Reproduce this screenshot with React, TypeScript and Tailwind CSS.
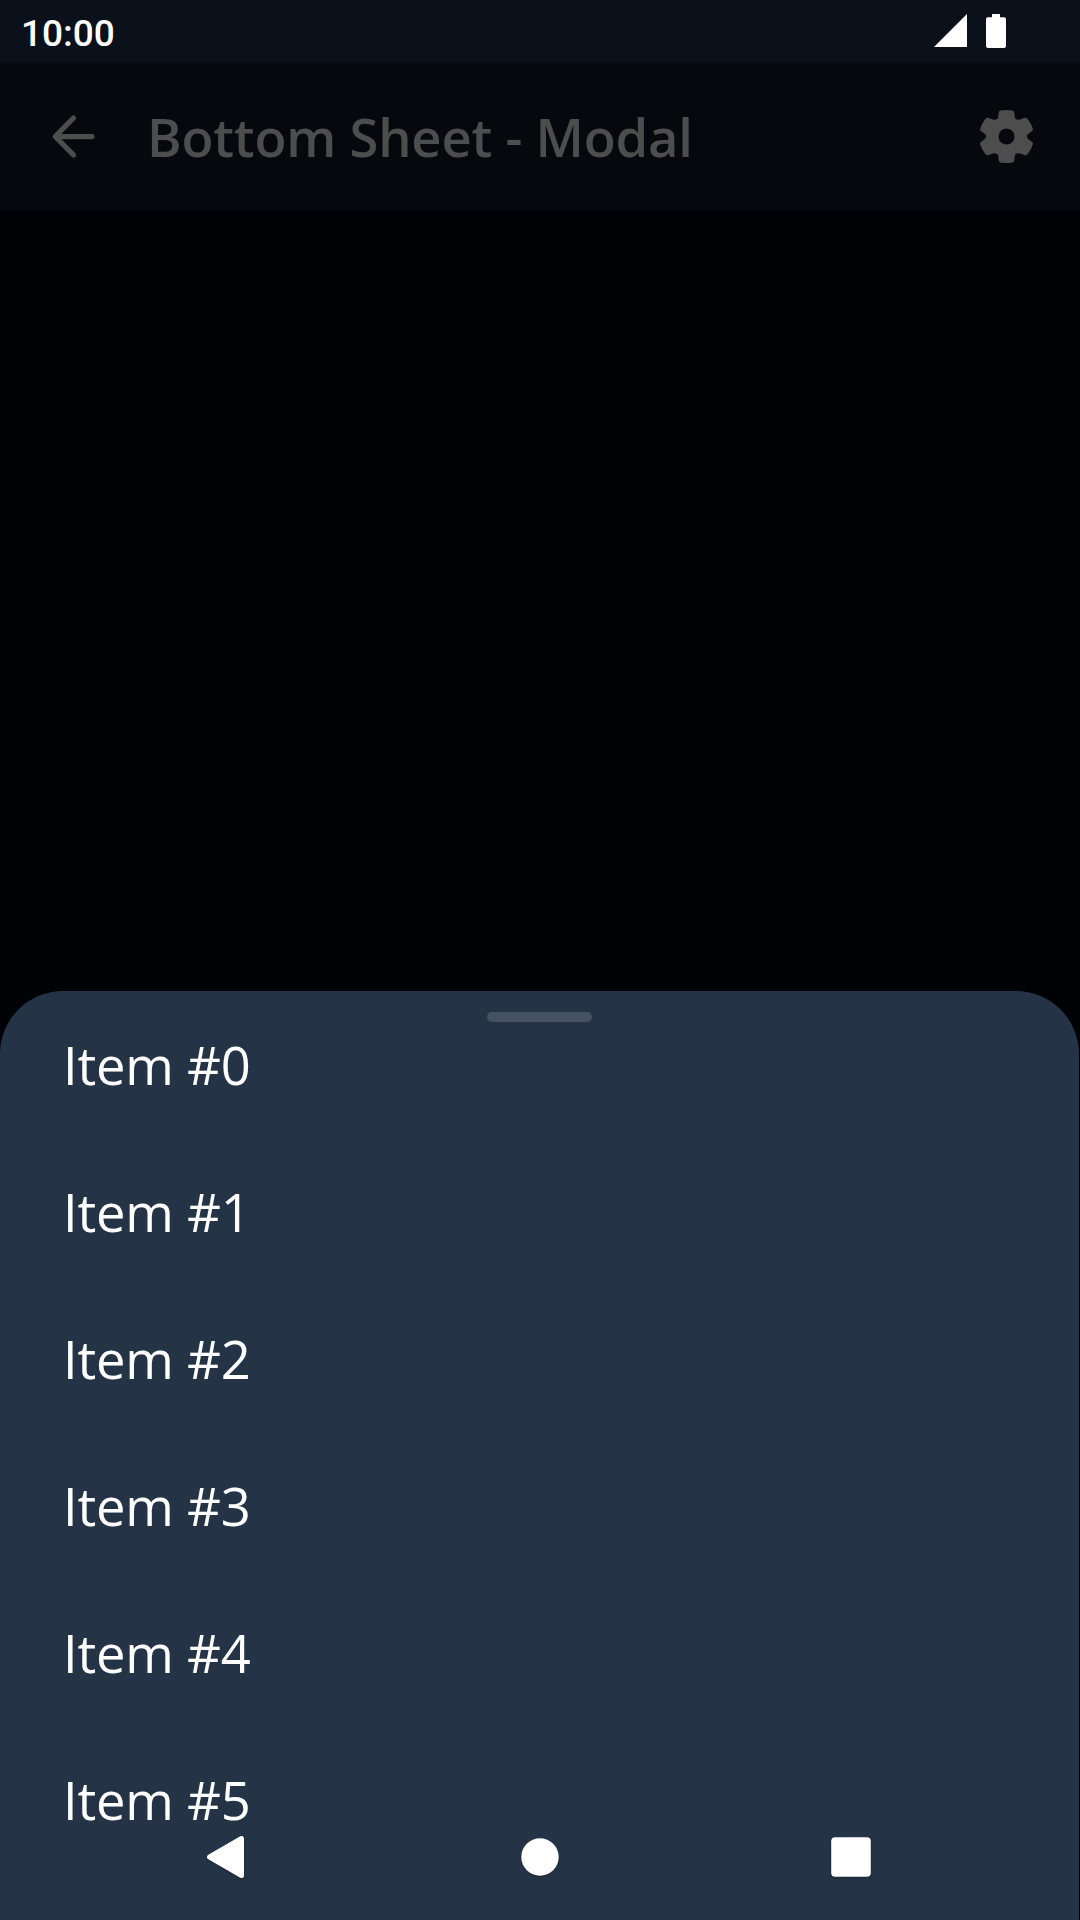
export default function App() {
  return (
    <div className="relative flex h-[1920px] w-[1080px] flex-col overflow-hidden bg-[#000205] font-['Open_Sans',sans-serif]">
      <div className="flex h-[63px] shrink-0 items-center justify-between bg-[#0a111a] pl-[21px] pr-[74px] text-white">
        <span className="font-['Roboto',sans-serif] text-[37px] font-medium leading-none pt-1">10:00</span>
        <div className="flex h-full items-start gap-[19px] pt-3.5">
          <svg className="h-[33px] w-[33px]" viewBox="0 0 33 33" fill="white"><path d="M33 0v33H0z" /></svg>
          <svg className="h-[34px] w-5" viewBox="0 0 20 34" fill="white"><path d="M6 0h8v3.300H18a2 2 0 0 1 2 2V32a2 2 0 0 1-2 2H2a2 2 0 0 1-2-2V5.300a2 2 0 0 1 2-2h4z" /></svg>
        </div>
      </div>
      <header className="flex h-[147px] shrink-0 items-center bg-[#05080d] pl-[42px] pr-[42px] text-[#4d4d4d]">
        <svg className="h-[63px] w-[63px]" viewBox="0 0 63 63" fill="none" stroke="currentColor" strokeWidth="5.250" strokeLinecap="round" strokeLinejoin="round"><path d="M50 31.500H13.500M31.500 13L13.200 31.500L31.500 50" /></svg>
        <h1 className="ml-[42px] flex-1 pt-0.5 text-[52.500px] font-semibold tracking-[-0.2px]">Bottom Sheet - Modal</h1>
        <svg className="h-[63px] w-[63px]" viewBox="-31.5 -31.5 63 63" fill="currentColor" fillRule="evenodd">
          <path d="M-6.200 -26Q0 -27 6.200 -26Q7.600 -25.500 7.800 -24L8.400 -18.500Q10.500 -16 13.500 -17L18.500 -18.800Q20 -19 21 -17.800Q24.800 -13 26.500 -7.500Q26.500 -6.500 25.600 -5.500L21.300 -2.200Q19.800 0 21.300 2.200L25.600 5.500Q26.500 6.500 26.500 7.500Q24.800 13 21 17.800Q20 19 18.500 18.800L13.500 17Q10.500 16 8.400 18.500L7.800 24Q7.600 25.500 6.200 26Q0 27 -6.200 26Q-7.600 25.500 -7.800 24L-8.400 18.500Q-10.500 16 -13.500 17L-18.500 18.800Q-20 19 -21 17.800Q-24.800 13 -26.500 7.500Q-26.500 6.500 -25.600 5.500L-21.300 2.200Q-19.800 0 -21.300 -2.200L-25.600 -5.500Q-26.500 -6.500 -26.500 -7.500Q-24.800 -13 -21 -17.800Q-20 -19 -18.500 -18.800L-13.500 -17Q-10.500 -16 -8.400 -18.500L-7.800 -24Q-7.600 -25.500 -6.200 -26ZM8 0A8 8 0 1 0 -8 0A8 8 0 1 0 8 0Z" />
        </svg>
      </header>
      <main className="mt-[781px] flex h-[929px] w-[1079px] shrink-0 flex-col rounded-t-[63px] bg-[#243346]">
        <div className="ml-[487px] mt-[21px] h-[10px] w-[105px] shrink-0 rounded-full bg-[#465161]" />
        <ul className="-mt-[31px] text-[52.500px] leading-[147px] tracking-[-0.2px] text-white">
          {[0, 1, 2, 3, 4, 5].map((n) => (
            <li key={n} className="h-[147px] pl-[63px]">Item #{n}</li>
          ))}
        </ul>
      </main>
      <nav className="absolute inset-x-0 bottom-0 h-[126px]">
        <svg className="h-full w-full drop-shadow-[0_1px_1px_rgba(0,0,0,0.3)]" viewBox="0 0 1080 126" fill="white">
          <path d="M209.500 63L241.500 44.500V81.500z" stroke="white" strokeWidth="5" strokeLinejoin="round" />
          <circle cx="540" cy="63" r="18.700" />
          <rect x="831.200" y="43.200" width="39.600" height="39.600" rx="4" />
        </svg>
      </nav>
    </div>
  );
}
